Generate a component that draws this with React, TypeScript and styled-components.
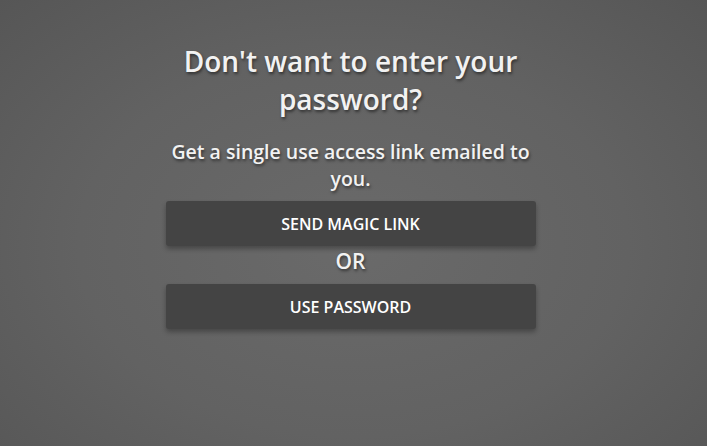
import styled, { createGlobalStyle } from 'styled-components';

const GlobalStyle = createGlobalStyle`
  html, body {
    margin: 0;
    padding: 0;
    height: 100%;
  }
  body {
    font-family: 'Open Sans', 'Liberation Sans', sans-serif;
    background: radial-gradient(
      ellipse at 50% 55%,
      #6a6a6a 0%,
      #626262 55%,
      #565656 100%
    );
    background-attachment: fixed;
  }
  #root {
    min-height: 100%;
  }
`;

const Page = styled.div`
  width: 100%;
  min-height: 446px;
  display: flex;
  justify-content: center;
  padding: 42px 6px 0 0;
  box-sizing: border-box;
`;

const Panel = styled.div`
  width: 370px;
  display: flex;
  flex-direction: column;
  align-items: stretch;
  text-align: center;
  color: #f2f2f2;
  text-shadow: 1px 2px 3px rgba(0, 0, 0, 0.5);
`;

const Title = styled.h1`
  margin: 0;
  font-size: 28px;
  font-weight: 600;
  line-height: 38px;
`;

const Subtitle = styled.p`
  margin: 20px 0 9px;
  font-size: 19.5px;
  font-weight: 600;
  line-height: 27px;
`;

const ActionButton = styled.button`
  width: 100%;
  height: 45px;
  border: none;
  border-radius: 3px;
  background: #444444;
  color: #ffffff;
  font-family: inherit;
  font-size: 16px;
  font-weight: 600;
  text-transform: uppercase;
  box-shadow: 0 3px 5px rgba(0, 0, 0, 0.3);
  cursor: pointer;
`;

const Divider = styled.div`
  font-size: 21px;
  font-weight: 600;
  line-height: 30px;
  margin: 0 0 8px;
`;

const App = () => {
  return (
    <>
      <GlobalStyle />
      <Page>
        <Panel>
          <Title>Don't want to enter your password?</Title>
          <Subtitle>Get a single use access link emailed to you.</Subtitle>
          <ActionButton>Send magic link</ActionButton>
          <Divider>OR</Divider>
          <ActionButton>Use password</ActionButton>
        </Panel>
      </Page>
    </>
  );
};

export default App;
